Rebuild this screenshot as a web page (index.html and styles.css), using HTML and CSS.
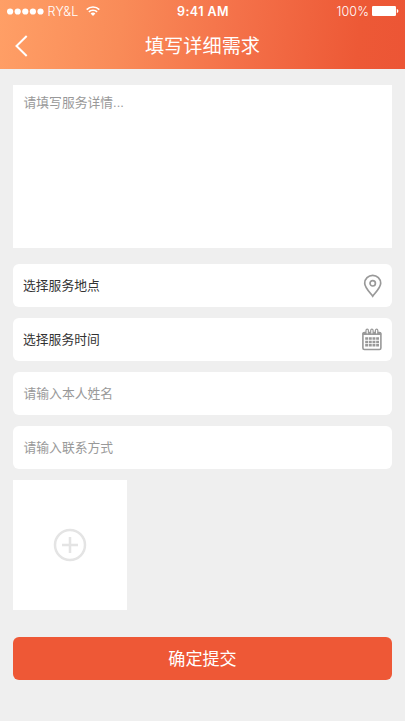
FILE: index.html
```html
<!DOCTYPE html>
<html lang="zh-CN">
<head>
<meta charset="utf-8">
<meta name="viewport" content="width=device-width, initial-scale=1">
<title>填写详细需求</title>
<link rel="stylesheet" href="styles.css">
</head>
<body>
<header class="header">
  <div class="status">
    <div class="status-left">
      <svg class="signal" width="37" height="7" viewBox="0 0 37 7" fill="#fff"><circle cx="3.1" cy="3.5" r="3.1"/><circle cx="10.7" cy="3.5" r="3.1"/><circle cx="18.3" cy="3.5" r="3.1"/><circle cx="25.9" cy="3.5" r="3.1"/><circle cx="33.5" cy="3.5" r="3.1"/></svg>
      <span class="carrier">RY&amp;L</span>
      <svg class="wifi" width="14" height="10" viewBox="0 0 14 10" fill="none" stroke="#fff" stroke-width="1.7"><path d="M.7 3.6C4.2.1 9.8.1 13.3 3.6M2.9 5.9C5.2 3.7 8.8 3.7 11.1 5.9"/><path d="M4.6 7.5C5.9 6.3 8.1 6.3 9.4 7.5L7 9.9Z" fill="#fff" stroke="none"/></svg>
    </div>
    <span class="clock">9:41 AM</span>
    <div class="status-right">
      <span class="percent">100%</span>
      <svg width="27" height="10" viewBox="0 0 27 10" fill="#fff"><rect width="24" height="10" rx="1.2"/><path d="M24.8 3C26.9 3.6 26.9 6.4 24.8 7Z"/></svg>
    </div>
  </div>
  <div class="navbar">
    <svg class="back" width="14" height="22" viewBox="0 0 14 22" fill="none" stroke="#fff" stroke-width="2"><path d="M12.7 1L2.5 11L12.7 21"/></svg>
    <h1 class="title">填写详细需求</h1>
  </div>
</header>
<main class="form">
  <div class="details">请填写服务详情...</div>
  <div class="field picker">
    <span>选择服务地点</span>
    <svg width="20" height="24" viewBox="0 0 20 24" fill="none" stroke="#999" stroke-width="1.7"><path d="M9.7 22.200C7.200 18.800 1.700 13.500 1.700 9.200A8 7.900 0 0 1 17.700 9.200C17.700 13.500 12.200 18.800 9.700 22.200Z"/><circle cx="9.700" cy="9.300" r="2.700"/></svg>
  </div>
  <div class="field picker">
    <span>选择服务时间</span>
    <svg class="calendar" width="20" height="24" viewBox="0 0 20 24" fill="none" stroke="#999"><rect x=".9" y="4.500" width="18" height="17" rx="1.500" stroke-width="1.600"/><path d="M1 5H18.800V6.500H1Z" fill="#999"/><g fill="#fff" stroke-width="1.200"><rect x="4" y="1.200" width="2.400" height="5" rx="1.200"/><rect x="8.700" y="1.200" width="2.400" height="5" rx="1.200"/><rect x="13.400" y="1.200" width="2.400" height="5" rx="1.200"/></g><path d="M3.200 10.600H17M3.200 13.900H17M3.200 17.200H17" stroke-width="2.500" stroke-dasharray="2.900 .75"/></svg>
  </div>
  <div class="field hint">请输入本人姓名</div>
  <div class="field hint">请输入联系方式</div>
  <div class="upload">
    <svg width="34" height="34" viewBox="0 0 34 34" fill="none" stroke="#e4e4e4" stroke-width="2.500"><circle cx="17" cy="17" r="15"/><path d="M9 17H25M17 9V25"/></svg>
  </div>
  <button class="submit">确定提交</button>
</main>
</body>
</html>
```
FILE: styles.css
```css
* { box-sizing: border-box; }

body {
  margin: 0;
  min-height: 721px;
  background: #efefef;
  font-family: "Liberation Sans", "Noto Sans CJK SC", sans-serif;
}

.header {
  height: 69px;
  background: linear-gradient(96deg, #ff9f66 0%, #f98b58 30%, #f47149 58%, #ed5936 88%, #ec5535 100%);
  color: #fff;
}

.status {
  display: grid;
  grid-template-columns: 1fr auto 1fr;
  align-items: center;
  height: 22px;
  padding: 0 6px 0 7px;
  font: 12.5px/20px Inter, sans-serif;
}

.status-left,
.status-right {
  display: flex;
  align-items: center;
}

.status-right { justify-content: flex-end; gap: 3px; }

.carrier,
.clock,
.percent { padding-top: 2px; }

.carrier { margin-left: 3.5px; font-weight: 300; letter-spacing: .3px; }
.wifi { margin-left: 7px; }
.clock { font-weight: 600; letter-spacing: .45px; }
.percent { font-weight: 300; letter-spacing: .1px; }

.navbar {
  display: grid;
  grid-template-columns: 14px 1fr 14px;
  align-items: center;
  height: 47px;
  padding: 0 14px;
}

.title {
  margin: 0;
  padding-bottom: 2px;
  font: 400 19.2px/28px "Noto Sans CJK SC", sans-serif;
  text-align: center;
}

.form {
  display: flex;
  flex-direction: column;
  gap: 11px;
  padding: 16px 13px 0;
}

.details {
  height: 162.5px;
  margin-bottom: 5.5px;
  padding: 8px 10.5px;
  background: #fff;
  color: #999;
  font-size: 12.8px;
  line-height: 20px;
}

.field {
  display: flex;
  align-items: center;
  justify-content: space-between;
  height: 43px;
  padding: 0 9px 0 10px;
  border-radius: 6px;
  background: #fff;
  color: #333;
  font-size: 12.8px;
}

.picker span { padding-bottom: 2px; }
.hint { padding: 0 9px 2px 10.5px; color: #999; }
.calendar { margin-right: 1px; }

.upload {
  display: flex;
  align-items: center;
  justify-content: center;
  width: 113.5px;
  height: 129.5px;
  background: #fff;
}

.submit {
  height: 43px;
  margin-top: 16.5px;
  padding: 0 0 2px;
  border: 0;
  border-radius: 6px;
  background: #ee5836;
  color: #fff;
  font: 400 17.1px/41px "Noto Sans CJK SC", sans-serif;
}
```
